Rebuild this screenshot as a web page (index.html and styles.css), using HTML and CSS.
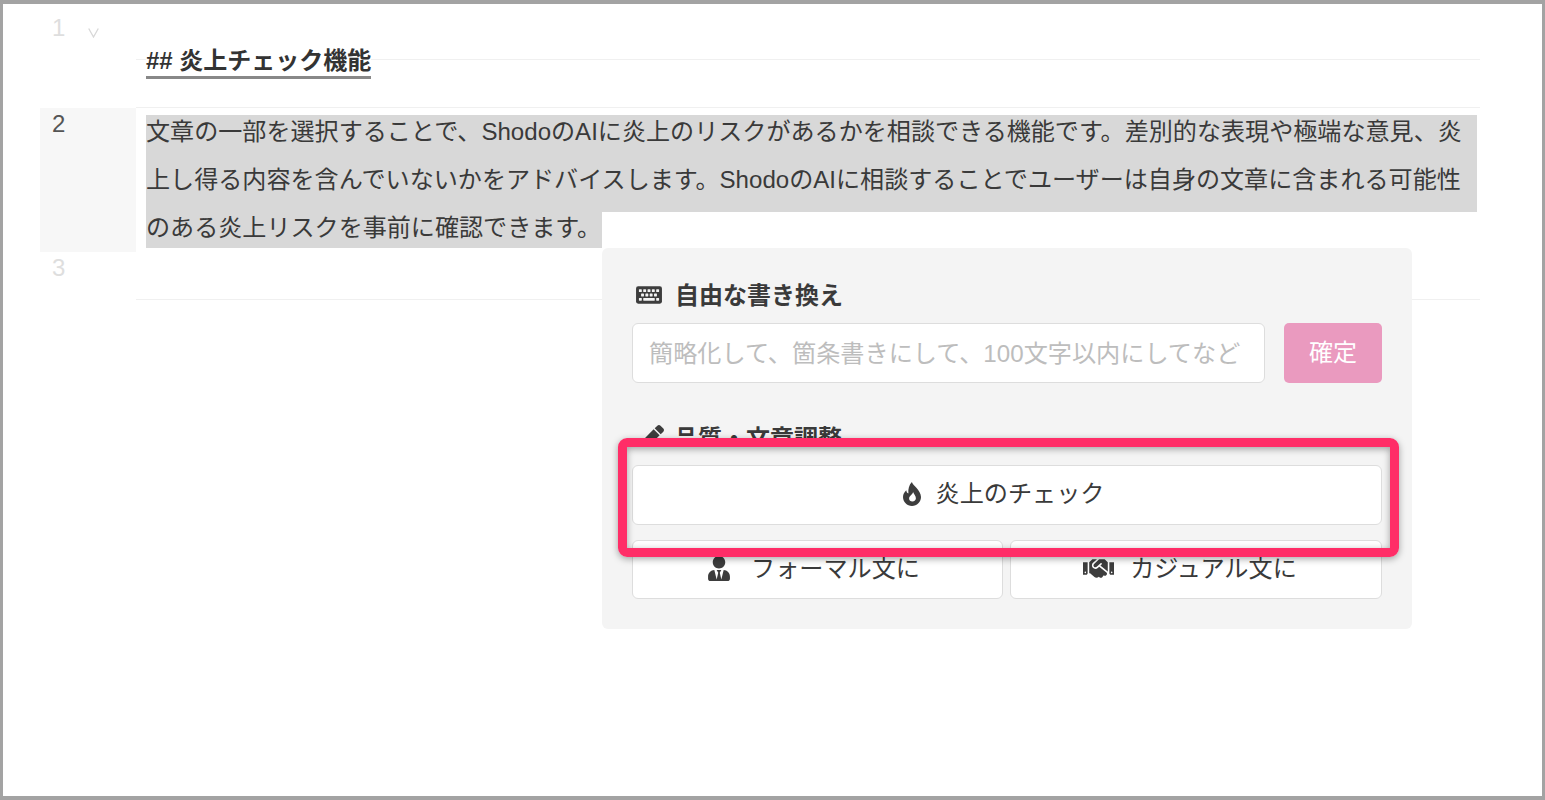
FILE: index.html
```html
<!DOCTYPE html>
<html lang="ja">
<head>
<meta charset="utf-8">
<title>炎上チェック機能</title>
<link rel="stylesheet" href="styles.css">
</head>
<body>
<div class="frame">
  <div class="editor">
    <div class="row row-heading">
      <div class="gutter gutter-muted"><span class="num">1</span><svg class="fold" viewBox="0 0 11 10"><path d="M0.7 0.5 L5.5 9 L10.3 0.5" fill="none" stroke="#d8d8d8" stroke-width="1.3"/></svg></div>
      <div class="content content-heading"><h2 class="heading">## 炎上チェック機能</h2></div>
    </div>
    <div class="row row-body">
      <div class="gutter gutter-active gutter-short"><span class="num">2</span></div>
      <div class="content content-body">
        <div class="line line-first">文章の一部を選択することで、ShodoのAIに炎上のリスクがあるかを相談できる機能です。差別的な表現や極端な意見、炎</div>
        <div class="line line-mid">上し得る内容を含んでいないかをアドバイスします。ShodoのAIに相談することでユーザーは自身の文章に含まれる可能性</div>
        <div class="line line-last">のある炎上リスクを事前に確認できます。</div>
      </div>
    </div>
    <div class="row row-empty">
      <div class="gutter gutter-muted gutter-short"><span class="num">3</span></div>
      <div class="content content-empty"></div>
    </div>
  </div>

  <div class="popup">
    <div class="title">
      <svg class="icon-keyboard" viewBox="0 0 576 400"><rect y="8" width="576" height="384" rx="48" fill="#3d3d3d"/><g fill="#f4f4f4"><rect x="64" y="72" width="64" height="64" rx="10"/><rect x="160" y="72" width="64" height="64" rx="10"/><rect x="256" y="72" width="64" height="64" rx="10"/><rect x="352" y="72" width="64" height="64" rx="10"/><rect x="448" y="72" width="64" height="64" rx="10"/><rect x="112" y="168" width="64" height="64" rx="10"/><rect x="208" y="168" width="64" height="64" rx="10"/><rect x="304" y="168" width="64" height="64" rx="10"/><rect x="400" y="168" width="64" height="64" rx="10"/><rect x="64" y="264" width="64" height="64" rx="10"/><rect x="160" y="264" width="256" height="64" rx="10"/><rect x="448" y="264" width="64" height="64" rx="10"/></g></svg>
      <span>自由な書き換え</span>
    </div>
    <div class="input-row">
      <input class="input" type="text" placeholder="簡略化して、箇条書きにして、100文字以内にしてなど">
      <button class="confirm" type="button"><span>確定</span></button>
    </div>
    <div class="title title-clipped">
      <svg class="icon-pen" viewBox="0 0 512 512"><path fill="#3d3d3d" d="M290.74 93.24l128.02 128.02-277.99 277.99-114.14 12.6C11.35 513.54-1.56 500.62.14 485.34l12.7-114.22 277.9-278.88zm207.2-19.06l-60.11-60.11c-18.75-18.75-49.16-18.75-67.91 0l-56.55 56.55 128.02 128.02 56.55-56.55c18.75-18.76 18.75-49.16 0-67.91z"/></svg>
      <span>品質・文章調整</span>
    </div>
    <button class="action action-wide" type="button">
      <svg class="icon-fire" viewBox="0 0 384 512"><path fill="#3d3d3d" fill-rule="evenodd" d="M190 0C200 70 384 170 384 320C384 426 298 512 192 512S0 426 0 320C0 260 30 215 70 175C75 215 90 235 115 245C105 150 130 60 190 0ZM215 215C205 270 130 300 130 350C130 390 160 415 200 415C245 415 275 385 275 345C275 295 230 265 215 215Z"/></svg>
      <span>炎上のチェック</span>
    </button>
    <div class="action-row">
      <button class="action action-formal" type="button">
        <svg class="icon-user" viewBox="0 0 448 512"><path fill="#3d3d3d" d="M224 256c70.7 0 128-57.3 128-128S294.7 0 224 0 96 57.3 96 128s57.3 128 128 128zm95.8 32.6L272 480l-32-136 32-56h-96l32 56-32 136-47.8-191.4C56.9 292 0 350.3 0 422.4V464c0 26.5 21.5 48 48 48h352c26.5 0 48-21.5 48-48v-41.6c0-72.1-56.9-130.4-128.2-133.8z"/></svg>
        <span>フォーマル文に</span>
      </button>
      <button class="action action-casual" type="button">
        <svg class="icon-hands" viewBox="0 0 640 512"><path fill="#3d3d3d" d="M434.7 64h-85.9c-8 0-15.7 3-21.6 8.4l-98.3 90c-.1.1-.2.3-.3.4-16.6 15.6-16.3 40.5-2.1 56 12.7 13.9 39.4 17.6 56.1 2.7.1-.1.3-.1.4-.2l79.9-73.2c6.5-5.9 16.7-5.5 22.6 1 6 6.5 5.5 16.6-1 22.6l-26.1 23.9L504 313.8c2.9 2.4 5.5 5 7.9 7.7V128l-54.6-54.6c-5.9-6-14.1-9.4-22.6-9.4zM544 128.2v223.9c0 17.7 14.3 32 32 32h64V128.2h-96zm48 223.9c-8.8 0-16-7.2-16-16s7.2-16 16-16 16 7.2 16 16-7.2 16-16 16zM0 384h64c17.7 0 32-14.3 32-32V128.2H0V384zm48-63.9c8.8 0 16 7.2 16 16s-7.2 16-16 16-16-7.2-16-16c0-8.9 7.2-16 16-16zm435.9 18.6L334.6 217.5l-30 27.5c-29.7 27.1-75.2 24.5-101.7-4.4-26.9-29.4-24.8-74.9 4.4-101.7L289.1 64h-83.8c-8.5 0-16.6 3.4-22.6 9.4L128 128v223.9h18.3l90.5 81.9c27.4 22.3 67.7 18.1 90-9.3l.2-.2 17.9 15.5c15.9 13 39.4 10.5 52.3-5.4l31.4-38.6 5.4 4.4c13.7 11.1 33.9 9.1 45-4.7l9.5-11.7c11.2-13.8 9.1-33.9-4.6-45.1z"/></svg>
        <span>カジュアル文に</span>
      </button>
    </div>
  </div>

  <div class="annotation"></div>
</div>
</body>
</html>
```
FILE: styles.css
```css
* { box-sizing: border-box; }
html, body { margin: 0; padding: 0; height: 800px; overflow: hidden; background: #fff; }
body, input, button {
  font-family: "Liberation Sans", "Noto Sans CJK JP", sans-serif;
  color: #3a3a3a;
}
.frame {
  position: relative;
  width: 1545px;
  height: 800px;
  border: solid #a3a3a3;
  border-width: 4px 3px;
  background: #fff;
  overflow: hidden;
}
.editor { padding: 0 62px 0 37px; }
.row { display: flex; }
.row-heading { height: 103px; }
.row-body { height: 145px; }
.row-empty { height: 48px; }
.gutter { width: 96px; flex: none; display: flex; font-size: 24px; line-height: 48px; padding-left: 12px; }
.gutter-muted { color: #dedede; }
.gutter-active { background: #f7f7f7; color: #555; height: 144px; margin-top: 1px; }
.gutter-short { line-height: 32px; }
.fold { width: 11px; height: 10px; margin: 24px 0 0 23px; flex: none; }
.content { flex: 1; min-width: 0; padding-left: 10px; }
.content-heading {
  background: linear-gradient(#f0f0f0, #f0f0f0) 0 55px / 100% 1px no-repeat;
  padding-top: 42px;
}
.heading {
  display: inline-block;
  margin: 0;
  font-size: 24px;
  line-height: 30px;
  font-weight: 700;
  color: #333;
  background: #fff;
  border-bottom: 3px solid #888;
  white-space: nowrap;
}
.content-body { border-top: 1px solid #f0f0f0; }
.line {
  width: 1331px;
  height: 48px;
  font-size: 24.09px;
  line-height: 48px;
  white-space: nowrap;
  color: #3a3a3a;
}
.line-first { background: linear-gradient(transparent 7px, #d8d8d8 7px); }
.line-mid { background: #d8d8d8; }
.line-last {
  background:
    linear-gradient(#d8d8d8, #d8d8d8) 0 0 / 100% 8px no-repeat,
    linear-gradient(#d8d8d8, #d8d8d8) 0 0 / 456px 44px no-repeat;
}
.content-empty { border-bottom: 1px solid #f0f0f0; }

.popup {
  position: absolute;
  left: 599px;
  top: 244px;
  width: 810px;
  height: 381px;
  padding: 30px;
  background: #f4f4f4;
  border-radius: 6px;
}
.title {
  display: flex;
  align-items: center;
  height: 34px;
  padding-left: 4px;
  font-size: 24px;
  font-weight: 700;
  color: #3a3a3a;
  margin-bottom: 11px;
}
.title span { margin-left: 13px; padding-bottom: 4px; }
.icon-keyboard { width: 26px; height: 18px; flex: none; }
.input-row { display: flex; gap: 19px; height: 60px; }
.input {
  width: 633px;
  flex: none;
  height: 60px;
  padding: 2px 16px 0;
  font-size: 24.16px;
  background: #fff;
  border: 1px solid #ddd;
  border-radius: 6px;
  outline: none;
}
.input::placeholder { color: #bdbdbd; opacity: 1; }
.confirm {
  width: 98px;
  height: 60px;
  font-size: 24px;
  color: #fff;
  background: #ea9abf;
  border: 0;
  border-radius: 5px;
  padding: 0 0 6px;
}
.title-clipped {
  height: 27px;
  margin: 37px 0 18px;
  align-items: flex-start;
  overflow: hidden;
  line-height: 38px;
}
.title-clipped span { margin-left: 10px; padding-bottom: 0; }
.icon-pen { width: 24px; height: 24px; flex: none; margin: 5px 0 0 4px; }
.action {
  display: flex;
  align-items: center;
  justify-content: center;
  background: #fff;
  border: 1px solid #ddd;
  border-radius: 6px;
  font-size: 24.15px;
  color: #3a3a3a;
  padding: 0 7px 2px 0;
}
.action span { padding-bottom: 5px; }
.action-wide { width: 100%; height: 60px; margin-bottom: 15px; }
.action-row { display: flex; gap: 7px; height: 59px; }
.action-formal { width: 371px; flex: none; }
.action-casual { flex: 1; padding-right: 12px; }
.icon-fire { width: 18px; height: 24px; margin-right: 15px; flex: none; }
.icon-user { width: 22px; height: 25px; margin-right: 21px; flex: none; }
.icon-hands { width: 31px; height: 25px; margin-right: 16px; flex: none; }
.annotation {
  position: absolute;
  left: 615px;
  top: 434px;
  width: 781px;
  height: 119px;
  border: 9px solid #ff2d67;
  border-radius: 9px;
  box-shadow: 0 2px 7px rgba(0, 0, 0, 0.35), inset 0 2px 7px rgba(0, 0, 0, 0.35);
}
```
